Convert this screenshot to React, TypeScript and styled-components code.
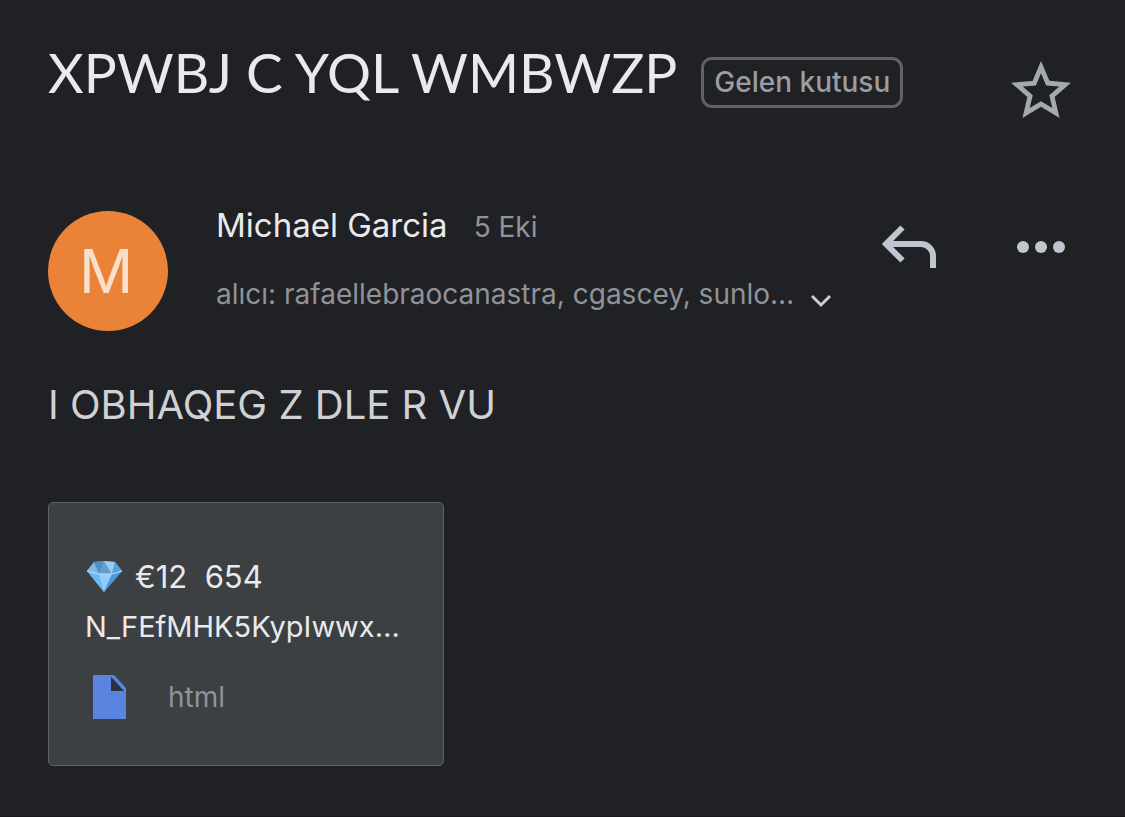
import React from "react";
import styled, { createGlobalStyle } from "styled-components";

const GlobalStyle = createGlobalStyle`
  * { box-sizing: border-box; }
  body {
    margin: 0;
    background: #202125;
    color: #e8eaed;
    font-family: Inter, "Liberation Sans", sans-serif;
  }
`;

const Page = styled.main`
  min-height: 100vh;
  padding: 40px 48px;
  border-bottom: 1px solid #17181b;
`;

const SubjectRow = styled.header`
  display: flex;
  align-items: flex-start;
  min-height: 88px;
`;

const Subject = styled.h1`
  margin: 0;
  font-family: Lato, sans-serif;
  font-size: 55px;
  line-height: 64px;
  font-weight: 400;
  color: #e8eaed;
  white-space: nowrap;
`;

const LabelChip = styled.button`
  height: 51px;
  margin: 17px 0 0 24px;
  padding: 0 10px;
  border: 3px solid #606266;
  border-radius: 11px;
  background: transparent;
  color: #9a9da2;
  font: 500 28px/45px Inter, sans-serif;
  white-space: nowrap;
`;

const IconButton = styled.button`
  display: flex;
  flex: none;
  padding: 0;
  border: 0;
  background: transparent;
  color: #c1c5d0;
`;

const StarButton = styled(IconButton)`
  margin: 15px 0 0 auto;
  color: #a5a9af;
`;

const SenderRow = styled.section`
  display: flex;
  align-items: flex-start;
  margin-top: 72px;
`;

const Avatar = styled.div`
  display: flex;
  flex: none;
  align-items: center;
  justify-content: center;
  width: 120px;
  height: 120px;
  margin: 11px 48px 0 0;
  padding-right: 4px;
  border-radius: 50%;
  background: #ea8238;
  color: #f9e0ca;
  font-size: 60px;
  line-height: 64px;
`;

const SenderDetails = styled.div`
  flex: 0 1 auto;
  min-width: 0;
`;

const NameLine = styled.div`
  display: flex;
  align-items: baseline;
  gap: 26px;
  line-height: 50px;
`;

const SenderName = styled.span`
  font-size: 33px;
`;

const DateText = styled.time`
  font-size: 28px;
  color: #909398;
`;

const RecipientButton = styled.button`
  display: flex;
  align-items: center;
  gap: 16px;
  margin: 22px 0 0;
  padding: 0;
  border: 0;
  background: transparent;
  color: #909398;
  font: 400 28px/40px Inter, sans-serif;
  white-space: nowrap;

  svg {
    margin-top: 14px;
    color: #c9ccd2;
  }
`;

const Actions = styled.div`
  display: flex;
  gap: 60px;
  margin: 10px 0 0 auto;
`;

const Message = styled.p`
  margin: 49px 0 0;
  font-size: 40px;
  line-height: 50px;
  color: #cfd1d5;
`;

const Attachment = styled.a`
  display: block;
  width: 396px;
  max-width: 100%;
  margin-top: 72px;
  padding: 49px 36px 46px;
  border: 1px solid #5f6368;
  border-radius: 5px;
  background: #3c4043;
  color: #e8eaed;
  text-decoration: none;
`;

const FileName = styled.div`
  font-size: 29px;
  line-height: 50px;
`;

const FileLine = styled.div`
  display: flex;
  align-items: center;
  gap: 12px;
  font-size: 31px;
  white-space: pre;
`;

const FileType = styled.div`
  display: flex;
  align-items: center;
  gap: 42px;
  margin-top: 23px;
  padding-left: 8px;
  font-size: 28px;
  line-height: 44px;
  color: #909398;
`;

const StarIcon = () => (
  <svg width="72" height="72" viewBox="0 0 24 24" fill="currentColor" aria-hidden="true">
    <path d="M22 9.24l-7.19-.62L12 2 9.19 8.63 2 9.24l5.46 4.73L5.82 21 12 17.27 18.18 21l-1.63-7.03L22 9.24zM12 15.4l-3.76 2.27 1-4.28-3.32-2.88 4.38-.38L12 6.1l1.71 4.04 4.38.38-3.32 2.88 1 4.28L12 15.4z" />
  </svg>
);

const ReplyIcon = () => (
  <svg width="72" height="72" viewBox="0 0 72 72" fill="none" stroke="currentColor" strokeWidth="6" aria-hidden="true">
    <path d="M29.5 17.5 13 34l16.5 16.5M13 34h35a12 12 0 0 1 12 12v12" />
  </svg>
);

const MoreIcon = () => (
  <svg width="72" height="72" viewBox="0 0 72 72" fill="currentColor" aria-hidden="true">
    <circle cx="18" cy="37" r="6" />
    <circle cx="36" cy="37" r="6" />
    <circle cx="54" cy="37" r="6" />
  </svg>
);

const ChevronIcon = () => (
  <svg width="22" height="14" viewBox="0 0 22 14" fill="none" stroke="currentColor" strokeWidth="3" aria-hidden="true">
    <path d="M2 2l9 9 9-9" />
  </svg>
);

const GemIcon = () => (
  <svg width="38" height="32" viewBox="0 0 38 32" aria-hidden="true">
    <path d="M9 1 19 0 30 1 37 10 19 31 2 10z" fill="#62b4ef" />
    <path d="M9 1 2 10l12 3z" fill="#7fb9de" />
    <path d="M9 1 19 0l-5 13z" fill="#4d8fc2" />
    <path d="M19 0l8 13H14z" fill="#5f9fce" />
    <path d="M19 0l11 1-3 12z" fill="#9fcbe8" />
    <path d="M30 1l7 9-10 3z" fill="#5aa0d8" />
    <path d="M2 10l12 3 5 18z" fill="#6cb8f2" />
    <path d="M14 13h13l-8 18z" fill="#93cdfa" />
    <path d="M27 13l10-3-18 21z" fill="#4a97e0" />
    <path d="M2 10l12 3h13l10-3" fill="none" stroke="#b9dff8" strokeWidth="1" />
  </svg>
);

const FileIcon = () => (
  <svg width="33" height="44" viewBox="0 0 33 44" aria-hidden="true">
    <path d="M0 0h21l12 13v31H0zM18 2v14h13z" fill="#5985e1" fillRule="evenodd" />
    <path d="M18 2v14h13z" fill="#2c3140" />
  </svg>
);

export default function App() {
  return (
    <>
      <GlobalStyle />
      <Page>
        <SubjectRow>
          <Subject>XPWBJ C YQL WMBWZP</Subject>
          <LabelChip type="button">Gelen kutusu</LabelChip>
          <StarButton type="button" aria-label="Yıldız ekle">
            <StarIcon />
          </StarButton>
        </SubjectRow>
        <SenderRow>
          <Avatar>M</Avatar>
          <SenderDetails>
            <NameLine>
              <SenderName>Michael Garcia</SenderName>
              <DateText>5 Eki</DateText>
            </NameLine>
            <RecipientButton type="button">
              alıcı: rafaellebraocanastra, cgascey, sunlo…
              <ChevronIcon />
            </RecipientButton>
          </SenderDetails>
          <Actions>
            <IconButton type="button" aria-label="Yanıtla">
              <ReplyIcon />
            </IconButton>
            <IconButton type="button" aria-label="Diğer">
              <MoreIcon />
            </IconButton>
          </Actions>
        </SenderRow>
        <Message>I OBHAQEG Z DLE R VU</Message>
        <Attachment href="#html">
          <FileName>
            <FileLine>
              <GemIcon />
              <span>€12{"  "}654</span>
            </FileLine>
            N_FEfMHK5KypIwwx…
          </FileName>
          <FileType>
            <FileIcon />
            html
          </FileType>
        </Attachment>
      </Page>
    </>
  );
}
